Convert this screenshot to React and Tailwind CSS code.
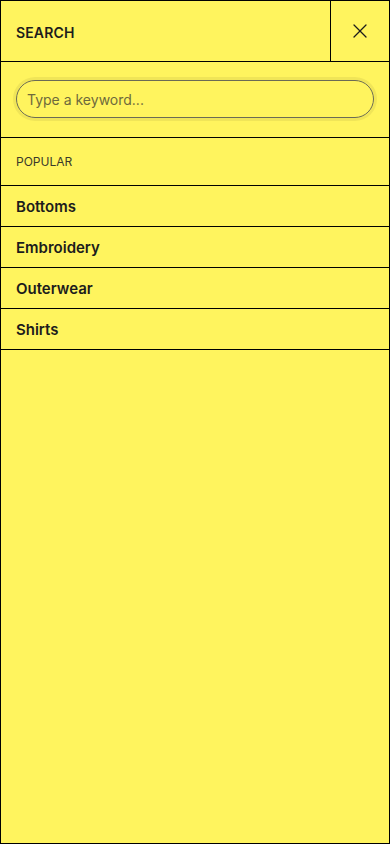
import { X } from 'lucide-react';

const POPULAR = ['Bottoms', 'Embroidery', 'Outerwear', 'Shirts'];

const App = () => {
  return (
    <div
      className="h-[844px] w-[390px] border border-black bg-[#fff45e] text-[#1c1c1c] flex flex-col"
      style={{ fontFamily: 'Inter, "Open Sans", sans-serif' }}
    >
      {/* Header */}
      <div className="flex h-[61px] border-b border-black">
        <div className="flex flex-1 items-center pl-[15px] pt-[2px] text-[14px] font-semibold tracking-[0.01em]">
          SEARCH
        </div>
        <button className="flex w-[59px] items-center justify-center border-l border-black">
          <X size={24} strokeWidth={1.3} />
        </button>
      </div>

      {/* Search input */}
      <div className="border-b border-black px-[15px] pt-[18px] pb-[19px]">
        <input
          type="text"
          placeholder="Type a keyword..."
          className="h-[38px] w-full rounded-full border border-[#6b6b55] bg-transparent px-[10px] pt-[1px] text-[14px] shadow-[0_0_0_3px_rgba(0,0,0,0.06)] outline-none placeholder:text-[#6e6a3c]"
        />
      </div>

      {/* Popular */}
      <div className="flex h-[48px] items-center border-b border-black pl-[15px] pt-[1px] text-[12px] text-[#3a3a2a]">
        POPULAR
      </div>
      <ul>
        {POPULAR.map((item) => (
          <li
            key={item}
            className="flex h-[41px] items-center border-b border-black pl-[15px] pt-[2px] text-[15px] font-semibold"
          >
            {item}
          </li>
        ))}
      </ul>
    </div>
  );
};

export default App;
